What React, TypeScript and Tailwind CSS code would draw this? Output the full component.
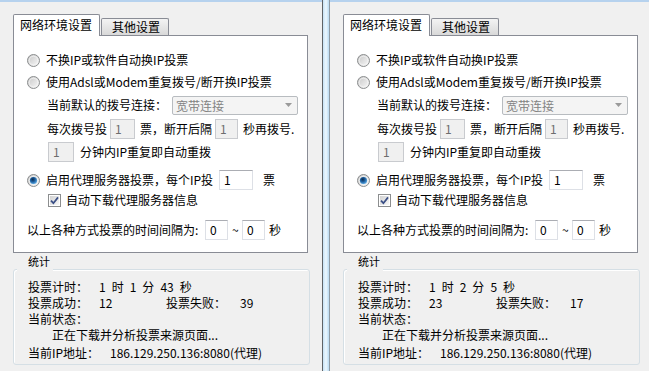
import React from 'react';

type Stats = { time: string[]; ok: string; fail: string };

const Radio: React.FC<{ checked?: boolean }> = ({ checked }) => (
    <svg width="13" height="13" viewBox="0 0 13 13" className="shrink-0">
        <defs>
            <linearGradient id="rbg" x1="0" y1="0" x2="1" y2="1">
                <stop offset="0" stopColor="#c4c4c4" />
                <stop offset="1" stopColor="#fbfbfb" />
            </linearGradient>
            <radialGradient id="rdot" cx="0.4" cy="0.35" r="0.7">
                <stop offset="0" stopColor="#0c2a4a" />
                <stop offset="0.45" stopColor="#1d5d9c" />
                <stop offset="1" stopColor="#5fb2ee" />
            </radialGradient>
        </defs>
        <circle cx="6.5" cy="6.5" r="6" fill="url(#rbg)" stroke="#8c8e8f" />
        <circle cx="6.5" cy="6.5" r="4.3" fill="none" stroke="#f4f4f4" strokeWidth="0.8" />
        {checked && <circle cx="6.5" cy="6.5" r="3.6" fill="url(#rdot)" />}
    </svg>
);

const Check: React.FC = () => (
    <svg width="13" height="13" viewBox="0 0 13 13" className="shrink-0">
        <defs>
            <linearGradient id="cbg" x1="0" y1="0" x2="1" y2="1">
                <stop offset="0" stopColor="#d2d2d2" />
                <stop offset="1" stopColor="#f8f8f8" />
            </linearGradient>
        </defs>
        <rect x="0.5" y="0.5" width="12" height="12" fill="#fff" stroke="#8c8e8f" />
        <rect x="2" y="2" width="9" height="9" fill="url(#cbg)" />
        <path d="M3 6.6 L5.4 9.2 L10 3.4" fill="none" stroke="#3b4f86" strokeWidth="1.7" />
    </svg>
);

const Box: React.FC<{ w: string; v: string; disabled?: boolean }> = ({ w, v, disabled }) => (
    <div
        className={
            disabled
                ? `${w} h-[20px] shrink-0 border border-[#c9cbcf] bg-[#f0f0f0] pl-[4px] leading-[18px] text-[#6d6d6d]`
                : `${w} h-[20px] shrink-0 border border-[#dde0e6] border-t-[#abadb3] bg-white pl-[4px] leading-[18px] text-black`
        }
    >
        {v}
    </div>
);

const Panel: React.FC<{ stats: Stats; width: string }> = ({ stats, width }) => (
    <div className={`${width} shrink-0 flex flex-col`}>
        <div className="h-[2px] bg-[#b6d2ee]" />
        <div className="pl-[13px] pt-[12px]">
            {/* tabs */}
            <div className="flex items-end h-[21px]">
                <div className="relative z-10 -mb-px h-[22px] w-[87px] border border-b-0 border-[#898c95] bg-white pt-[2px] pl-[6px] rounded-t-[2px]">
                    网络环境设置
                </div>
                <div className="h-[17px] w-[68px] ml-px border border-b-0 border-[#898c95] bg-linear-to-b from-[#f3f3f3] to-[#d9d9d9] pl-[10px] rounded-t-[2px]">
                    其他设置
                </div>
            </div>

            {/* tab page */}
            <div className="w-[295px] h-[218px] border border-[#898c95] bg-white pt-[13px]">
                <div className="flex items-center h-[22px] pl-[13px]">
                    <Radio />
                    <span className="ml-[6px]">不换IP或软件自动换IP投票</span>
                </div>
                <div className="flex items-center h-[22px] pl-[13px]">
                    <Radio />
                    <span className="ml-[6px]">使用Adsl或Modem重复拨号/断开换IP投票</span>
                </div>
                <div className="flex items-center h-[24px] pl-[33px]">
                    <span className="w-[120px]">当前默认的拨号连接：</span>
                    <div className="ml-[5px] w-[126px] h-[19px] flex items-center justify-between border border-[#b8bcc0] rounded-[2px] bg-[#f4f4f4] pl-[3px] pr-[5px] text-[#838383]">
                        <span className="leading-[17px]">宽带连接</span>
                        <svg width="7" height="4" viewBox="0 0 7 4">
                            <path d="M0 0 H7 L3.5 4 Z" fill="#9a9a9a" />
                        </svg>
                    </div>
                </div>
                <div className="flex items-center h-[24px] pl-[33px]">
                    <span className="w-[60px]">每次拨号投</span>
                    <div className="ml-[3px]"><Box w="w-[25px]" v="1" disabled /></div>
                    <span className="ml-[5px] w-[72px]">票，断开后隔</span>
                    <div className="ml-[3px]"><Box w="w-[23px]" v="1" disabled /></div>
                    <span className="ml-[5px]">秒再拨号.</span>
                </div>
                <div className="flex items-center h-[22px] pl-[34px]">
                    <Box w="w-[26px]" v="1" disabled />
                    <span className="ml-[6px]">分钟内IP重复即自动重拨</span>
                </div>
                <div className="flex items-center h-[22px] pl-[13px] mt-[6px]">
                    <Radio checked />
                    <span className="ml-[6px] w-[168px] shrink-0">启用代理服务器投票，每个IP投</span>
                    <div className="ml-[5px]"><Box w="w-[34px]" v="1" /></div>
                    <span className="ml-[10px]">票</span>
                </div>
                <div className="flex items-center h-[18px] pl-[34px]">
                    <Check />
                    <span className="ml-[5px]">自动下载代理服务器信息</span>
                </div>
                <div className="flex items-center h-[22px] pl-[13px] mt-[10px]">
                    <span className="w-[174px] shrink-0">以上各种方式投票的时间间隔为:</span>
                    <div className="ml-[4px]"><Box w="w-[23px]" v="0" /></div>
                    <span className="ml-[4px] w-[6px]">~</span>
                    <div className="ml-[4px]"><Box w="w-[23px]" v="0" /></div>
                    <span className="ml-[4px]">秒</span>
                </div>
            </div>

            {/* stats group */}
            <div className="relative mt-[16px] w-[297px] h-[96px] border border-[#d5dfe5] rounded-[3px] shadow-[inset_1px_1px_0_#ffffff] pt-[9px] pl-[14px]">
                <div className="absolute left-[3px] top-[-17px] h-[18px] bg-[#f0f0f0] pl-[11px] pr-[3px] text-[11px] leading-[14px] pt-[1px]">
                    统计
                </div>
                <div className="flex items-center h-[16px]">
                    <span className="w-[71px]">投票计时：</span>
                    <span className="flex gap-[6px]">
                        {stats.time.map((t, i) => (
                            <span key={i}>{t}</span>
                        ))}
                    </span>
                </div>
                <div className="flex items-center h-[16px]">
                    <span className="w-[71px]">投票成功：</span>
                    <span className="w-[67px]">{stats.ok}</span>
                    <span className="w-[74px]">投票失败：</span>
                    <span>{stats.fail}</span>
                </div>
                <div className="flex items-center h-[16px]">当前状态：</div>
                <div className="flex items-center h-[16px] pl-[24px]">正在下载并分析投票来源页面...</div>
                <div className="flex items-center h-[16px] mt-[2px]">
                    <span className="w-[82px]">当前IP地址：</span>
                    <span>186.129.250.136:8080(代理)</span>
                </div>
            </div>
        </div>
    </div>
);

export default function App() {
    return (
        <div className="w-[649px] h-[371px] overflow-hidden flex whitespace-nowrap bg-[#f0f0f0] text-black text-[12px] leading-[16px] font-['Noto_Sans_CJK_SC','Noto_Sans',sans-serif]">
            <Panel width="w-[322px]" stats={{ time: ['1', '时', '1', '分', '43', '秒'], ok: '12', fail: '39' }} />
            <div className="w-[8px] shrink-0 border-l border-l-[#5f6366] border-r border-r-[#8e9aa4] bg-linear-to-r from-[#c6e2f6] via-[#edf8fe] to-[#b9daf2]" />
            <Panel width="w-[319px]" stats={{ time: ['1', '时', '2', '分', '5', '秒'], ok: '23', fail: '17' }} />
        </div>
    );
}
